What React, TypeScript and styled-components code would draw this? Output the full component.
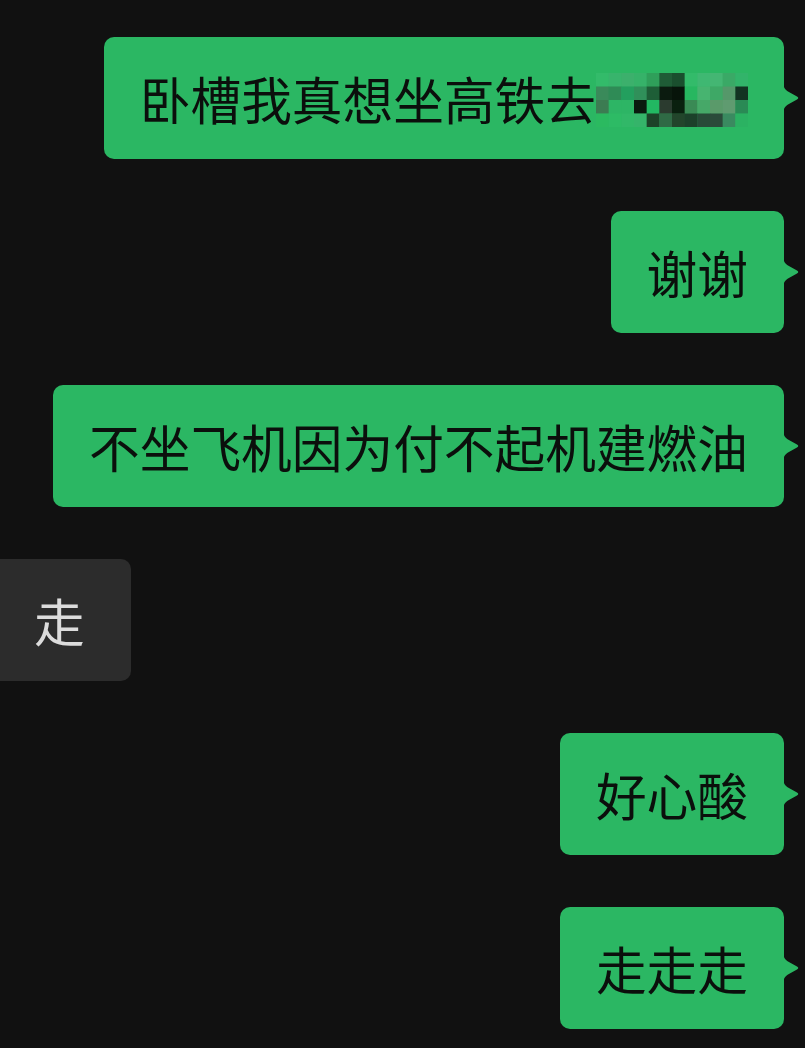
import React from 'react';
import styled, { createGlobalStyle } from 'styled-components';

const GREEN = '#2bb763';

const GlobalStyle = createGlobalStyle`
  html, body {
    margin: 0;
    padding: 0;
    background: #111111;
  }
  body {
    font-family: "Noto Sans CJK SC", "Noto Sans", sans-serif;
    overflow: hidden;
  }
`;

type Message = { id: number; mine: boolean; text: string; masked?: boolean };

const messages: Message[] = [
  { id: 1, mine: true, text: '卧槽我真想坐高铁去', masked: true },
  { id: 2, mine: true, text: '谢谢' },
  { id: 3, mine: true, text: '不坐飞机因为付不起机建燃油' },
  { id: 4, mine: false, text: '走' },
  { id: 5, mine: true, text: '好心酸' },
  { id: 6, mine: true, text: '走走走' },
];

// mosaic over the censored place name, 12 x 4 cells
const L = '#33bb6a';
const M = '#2db565';
const mosaic: string[][] = [
  [L, '#38b46c', '#3cb06c', '#36b269', '#2f9f5a', '#1f5c36', '#1a4f2e', L, '#3fb872', '#44b673', '#3aa966', '#32b46a'],
  ['#3a8a5a', '#2f8b56', '#239f5e', '#30905a', '#1e5e37', '#0b1b0f', '#07140a', '#27b760', '#47b470', '#3ea866', '#55986a', '#123322'],
  ['#3c7c52', M, M, '#0a1a0f', '#22b862', '#2b3b2f', '#0a200f', '#3a8a55', '#46a868', '#5a9a6a', '#5f9b70', '#2a8a55'],
  ['#2bba60', '#2dbb65', '#31b868', '#35b46a', '#1c4228', '#2f6a45', '#22452b', '#1c402a', '#284a38', '#2b4a3a', '#3a8a60', '#2bb262'],
];

const Screen = styled.div`
  display: flex;
  flex-direction: column;
  gap: 52px;
  padding: 37px 0 0;
  min-height: 1048px;
  box-sizing: border-box;
`;

const Row = styled.div<{ $mine: boolean }>`
  display: flex;
  justify-content: ${(p) => (p.$mine ? 'flex-end' : 'flex-start')};
  padding-right: 21px;
`;

const Bubble = styled.div<{ $mine: boolean }>`
  position: relative;
  box-sizing: border-box;
  height: 122px;
  display: flex;
  align-items: center;
  border-radius: 10px;
  font-size: 50.7px;
  line-height: 50px;
  white-space: nowrap;
  background: ${(p) => (p.$mine ? GREEN : '#2c2c2c')};
  color: ${(p) => (p.$mine ? '#0b0f0c' : '#dcdcdc')};
  padding: ${(p) => (p.$mine ? '0 36px' : '0 46px 0 44px')};
  margin-left: ${(p) => (p.$mine ? '0' : '-10px')};
`;

const Tail = styled.svg`
  position: absolute;
  right: -16px;
  top: 50%;
  transform: translateY(-50%);
  width: 17px;
  height: 34px;
`;

const Mosaic = styled.svg`
  display: block;
  width: 152px;
  height: 54px;
  margin-top: 4px;
`;

const Masked = () => (
  <Mosaic viewBox="0 0 156 54" preserveAspectRatio="none">
    {mosaic.map((row, r) =>
      row.map((c, i) => <rect key={`${r}-${i}`} x={i * 13} y={r * 13.5} width={13.3} height={13.8} fill={c} />)
    )}
  </Mosaic>
);

export default function App() {
  return (
    <>
      <GlobalStyle />
      <Screen>
        {messages.map((m) => (
          <Row key={m.id} $mine={m.mine}>
            <Bubble $mine={m.mine}>
              {m.text}
              {m.masked && <Masked />}
              {m.mine && (
                <Tail viewBox="0 0 17 34">
                  <path
                    d="M0 0 C0 6 2 8.5 5 10.5 L14 15.5 Q16.5 17 14 18.5 L5 23.5 C2 25.5 0 28 0 34 Z"
                    fill={GREEN}
                  />
                </Tail>
              )}
            </Bubble>
          </Row>
        ))}
      </Screen>
    </>
  );
}
